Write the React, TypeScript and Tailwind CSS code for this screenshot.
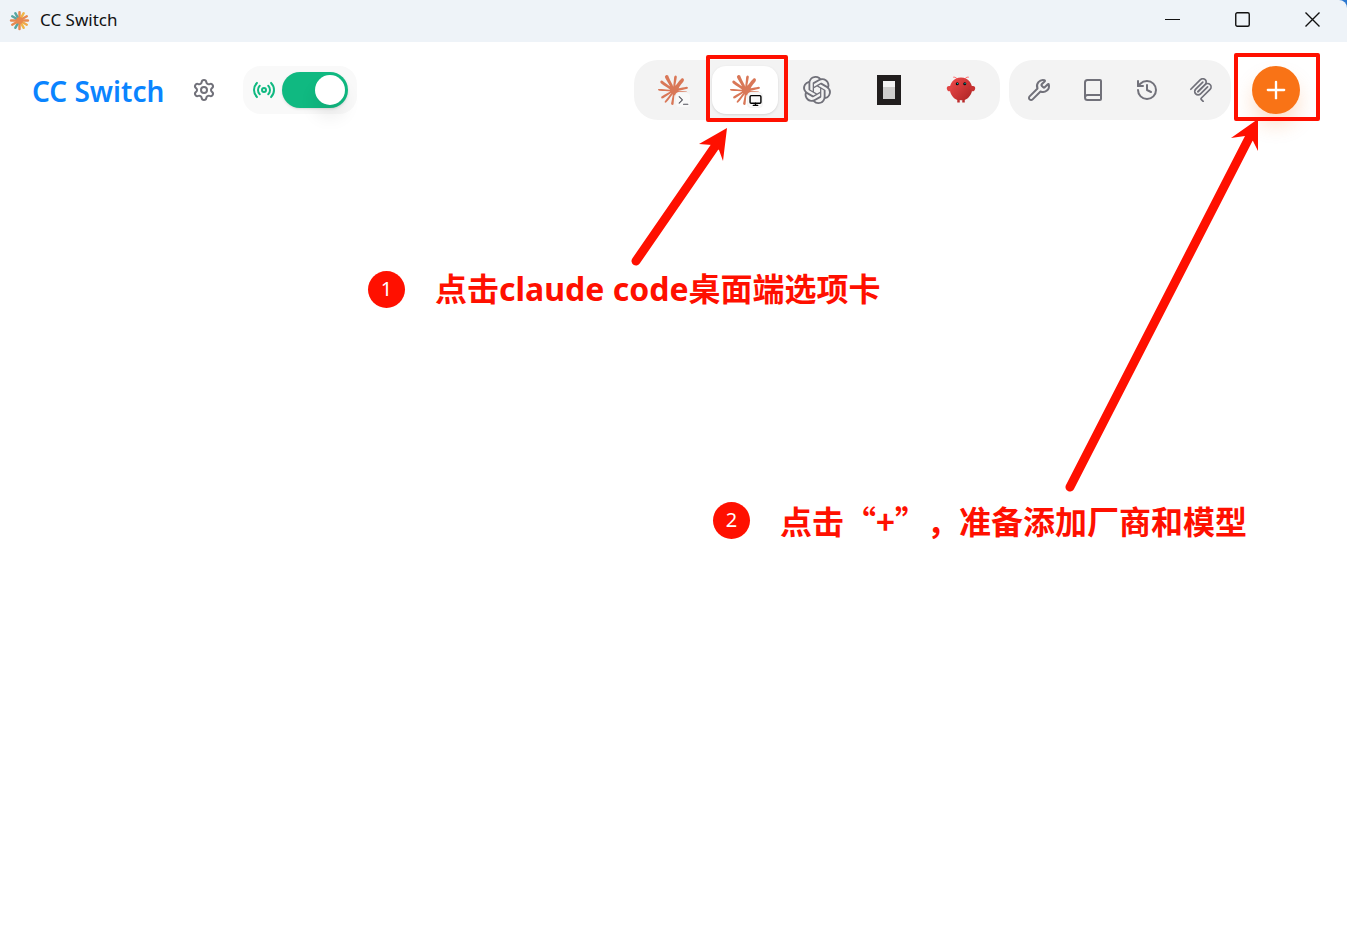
import { Settings, Radio, Wrench, Book, History, Plus, Terminal, Monitor } from "lucide-react";
import { SiClaude, SiOpenai } from "react-icons/si";

const RED = "#ff1000";

export default function App() {
  return (
    <div className="relative min-h-screen bg-white font-['Noto_Sans','Noto_Sans_CJK_SC',sans-serif]">
      <TitleBar />
      <Toolbar />
      <Annotations />
    </div>
  );
}

function TitleBar() {
  return (
    <div className="bg-[#2b78d0]">
      <div className="flex h-[42px] items-center rounded-tr-lg bg-[#eef3f8] pb-0.5 pl-[9px]">
        <AppLogo />
        <span className="ml-2.5 text-[17px] leading-6 text-[#111]">CC Switch</span>

        <div className="ml-auto flex h-full">
          <WindowButton label="Minimize">
            <path d="M0 7.5h15" strokeWidth="1" />
          </WindowButton>
          <WindowButton label="Maximize">
            <rect x="0.75" y="0.75" width="13.5" height="13.5" rx="1.5" />
          </WindowButton>
          <WindowButton label="Close">
            <path d="M0.5 0.5l14 14M14.5 0.5l-14 14" />
          </WindowButton>
        </div>
      </div>
    </div>
  );
}

function WindowButton({ label, children }) {
  return (
    <button aria-label={label} className="flex w-[70px] items-center justify-center pb-0.5">
      <svg width="15" height="15" viewBox="0 0 15 15" fill="none" stroke="#111" strokeWidth="1.4">
        {children}
      </svg>
    </button>
  );
}

function AppLogo() {
  const rays = ["#e8894f", "#f0b548", "#e8894f", "#e8894f", "#f0a848", "#f0b548", "#e8894f", "#58a5a0", "#e8894f", "#e8894f", "#58a5a0", "#58a5a0"];
  return (
    <svg width="21" height="21" viewBox="0 0 24 24" strokeWidth="2.8" strokeLinecap="round">
      {rays.map((color, i) => (
        <path key={i} d="M12 12V2.4" stroke={color} transform={`rotate(${i * 30} 12 12)`} />
      ))}
      <circle cx="12" cy="12" r="4" fill="#e88850" />
    </svg>
  );
}

function Toolbar() {
  return (
    <header className="flex items-center pt-[18px] pr-[47px] pl-8">
      <a href="#" className="pt-0.5 text-[28px] leading-9 font-semibold text-[#0a84ff]">CC Switch</a>
      <button aria-label="Settings" className="ml-7 flex size-6 items-center justify-center text-[#71717a]">
        <Settings size={24} strokeWidth={2} />
      </button>

      <label className="ml-[27px] flex h-12 items-center gap-1.5 rounded-[18px] bg-[#f9f9f9] px-[9px] text-[#10b981]">
        <Radio size={24} />
        <input type="checkbox" role="switch" aria-label="Proxy" defaultChecked className="peer sr-only" />
        <span className="flex h-9 w-[66px] justify-end rounded-full bg-[#10b981] p-[3px] shadow-sm">
          <span className="size-[30px] rounded-full bg-white shadow-[0_12px_18px_rgba(0,0,0,0.08)]" />
        </span>
      </label>

      <nav className="ml-auto flex gap-1.5 rounded-[24px] bg-[#f3f3f3] p-1.5">
        <AppTab label="Claude Code">
          <ClaudeIcon />
          <IconBadge>
            <Terminal size={13} strokeWidth={2} />
          </IconBadge>
        </AppTab>
        <AppTab label="Claude Desktop" active>
          <ClaudeIcon />
          <IconBadge>
            <Monitor size={13} strokeWidth={2.6} className="text-black" />
          </IconBadge>
          <span className="absolute -top-[11px] -right-[10px] -bottom-2 -left-1.5 rounded-xs border-4 border-[#ff1000]" />
        </AppTab>
        <AppTab label="Codex">
          <SiOpenai size={28} className="text-[#71717a]" />
        </AppTab>
        <AppTab label="OpenCode">
          <svg width="24" height="30" viewBox="0 0 24 30">
            <path d="M0 0h24v30H0z" fill="#211e1e" />
            <path d="M6 6h12v6H6z" fill="#f3f3f3" />
            <path d="M6 12h12v12H6z" fill="#cfcecd" />
          </svg>
        </AppTab>
        <AppTab label="OpenClaw">
          <ClawIcon />
        </AppTab>
      </nav>

      <div className="ml-[9px] flex gap-1.5 rounded-[24px] bg-[#f3f3f3] p-1.5 text-[#71717a]">
        <ToolButton label="Skills">
          <Wrench size={24} />
        </ToolButton>
        <ToolButton label="Prompts">
          <Book size={24} />
        </ToolButton>
        <ToolButton label="History">
          <History size={24} />
        </ToolButton>
        <ToolButton label="MCP">
          <McpIcon />
        </ToolButton>
      </div>

      <button
        aria-label="Add provider"
        className="relative ml-[21px] flex size-12 items-center justify-center rounded-full bg-[#f97316] text-white shadow-[0_12px_20px_-2px_rgba(249,115,22,0.25)]"
      >
        <Plus size={28} strokeWidth={2} />
        <span className="absolute -top-[13px] -right-5 -bottom-[7px] -left-[18px] rounded-xs border-4 border-[#ff1000]" />
      </button>
    </header>
  );
}

function AppTab({ label, active = false, children }) {
  return (
    <button
      aria-label={label}
      className={`relative flex h-12 w-[66px] items-center justify-center rounded-[14px] ${active ? "bg-white shadow-sm" : ""}`}
    >
      {children}
    </button>
  );
}

function ToolButton({ label, children }) {
  return (
    <button aria-label={label} className="flex size-12 items-center justify-center">
      {children}
    </button>
  );
}

function IconBadge({ children }) {
  return (
    <span className="absolute right-[15px] bottom-1.5 flex size-4 items-center justify-center rounded-sm border border-[#f3f3f3] bg-[#f9f9f9] text-[#52525b]">
      {children}
    </span>
  );
}

function ClaudeIcon() {
  return <SiClaude size={30} className="text-[#d97757]" />;
}

function ClawIcon() {
  return (
    <svg width="30" height="30" viewBox="0 0 120 120" fill="none">
      <defs>
        <linearGradient id="claw" x1="0" y1="0" x2="1" y2="1">
          <stop stopColor="#f04c4c" />
          <stop offset="1" stopColor="#a82020" />
        </linearGradient>
      </defs>
      <path
        d="M60 10c-30 0-45 25-45 45s15 40 30 45v10h10v-10s5 2 10 0v10h10v-10c15-5 30-25 30-45S90 10 60 10z"
        fill="url(#claw)"
      />
      <path d="M20 45C5 40 0 50 5 60s15 5 20-5c3-7 0-10-5-10z" fill="#e04444" />
      <path d="M100 45c15-5 20 5 15 15s-15 5-20-5c-3-7 0-10 5-10z" fill="#c73232" />
      <path d="M45 15Q35 5 30 8M75 15Q85 5 90 8" stroke="#ff4d4d" strokeWidth="3" strokeLinecap="round" />
      <circle cx="45" cy="35" r="6" fill="#050810" />
      <circle cx="75" cy="35" r="6" fill="#050810" />
      <circle cx="46" cy="34" r="2.5" fill="#00e5cc" />
      <circle cx="76" cy="34" r="2.5" fill="#00e5cc" />
    </svg>
  );
}

function McpIcon() {
  return (
    <svg width="24" height="24" viewBox="12 18 170 170" fill="none" stroke="currentColor" strokeWidth="12" strokeLinecap="round">
      <path d="M25 97.85L92.88 29.97C102.26 20.6 117.45 20.6 126.82 29.97C136.2 39.34 136.2 54.54 126.82 63.91L75.56 115.18" />
      <path d="M76.27 114.47L126.82 63.91C136.2 54.54 151.39 54.54 160.77 63.91L161.12 64.27C170.49 73.64 170.49 88.83 161.12 98.21L99.72 159.6C96.6 162.72 96.6 167.79 99.72 170.91L112.33 183.52" />
      <path d="M109.85 46.94L59.65 97.15C50.28 106.52 50.28 121.71 59.65 131.09C69.02 140.46 84.22 140.46 93.59 131.09L143.79 80.88" />
    </svg>
  );
}

// Tutorial notes drawn over the window, pinned to the right like the buttons they point at
function Annotations() {
  return (
    <div className="pointer-events-none absolute top-0 right-0 h-[560px] w-[980px]">
      <svg className="absolute inset-0" width="980" height="560" viewBox="367 0 980 560" fill={RED} stroke={RED}>
        <path d="M636 261L716 145" strokeWidth="9" strokeLinecap="round" />
        <path d="M727 128l-28 16 13 1 7 5 4 11z" stroke="none" />
        <path d="M1070 487L1249 138" strokeWidth="9" strokeLinecap="round" />
        <path d="M1258 119l-27 19 14-2 8 5 5 10z" stroke="none" />
      </svg>
      <Note number={1} className="top-[268px] left-px gap-[30px]" text="点击claude code桌面端选项卡" />
      <Note
        number={2}
        className="top-[499px] left-[346px] gap-[30px] font-['Noto_Sans_CJK_SC',sans-serif] [text-spacing-trim:space-all]"
        text="点击“+”，准备添加厂商和模型"
      />
    </div>
  );
}

function Note({ number, text, className }) {
  return (
    <div lang="zh-CN" className={`absolute flex items-center whitespace-nowrap ${className}`}>
      <span className="flex size-[37px] items-center justify-center rounded-full bg-[#ff1000] font-['Noto_Sans',sans-serif] text-xl text-white">
        {number}
      </span>
      <p className="text-[32px] leading-[42px] font-bold text-[#ff1000]">{text}</p>
    </div>
  );
}
